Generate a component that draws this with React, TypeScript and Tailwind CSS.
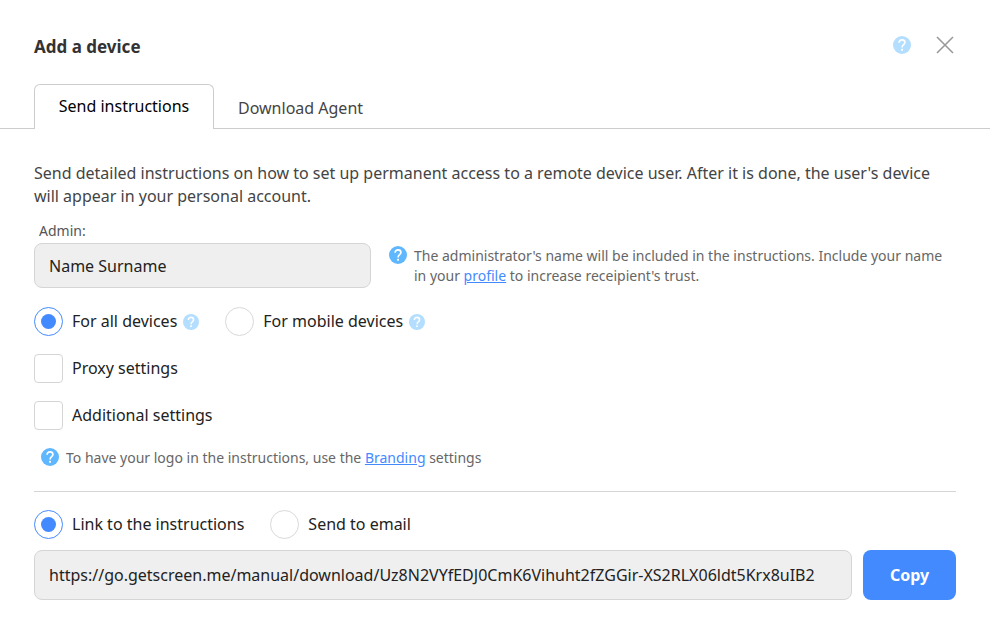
import { useState } from 'react';
import type { ReactNode } from 'react';

const MANUAL_URL =
  'https://go.getscreen.me/manual/download/Uz8N2VYfEDJ0CmK6Vihuht2fZGGir-XS2RLX06ldt5Krx8uIB2';

const tabs = [
  { id: 'send', title: 'Send instructions' },
  { id: 'download', title: 'Download Agent' },
];

function HelpIcon({ className }: { className: string }) {
  return (
    <svg viewBox="0 0 18 18" className={`shrink-0 ${className}`} aria-hidden="true">
      <circle cx="9" cy="9" r="9" fill="currentColor" />
      <path
        d="M6.1 6.7C6.1 4.9 7.3 3.8 9 3.8s2.9 1 2.9 2.6c0 1.1-.6 1.7-1.5 2.4-.9.7-1.3 1.1-1.3 2.6"
        fill="none"
        stroke="#fff"
        strokeWidth="1.7"
      />
      <rect x="8.1" y="12.8" width="1.9" height="1.9" fill="#fff" />
    </svg>
  );
}

interface RadioProps {
  name: string;
  checked: boolean;
  onChange: () => void;
  children: ReactNode;
}

function Radio({ name, checked, onChange, children }: RadioProps) {
  return (
    <label className="flex items-center gap-[9px]">
      <input
        type="radio"
        name={name}
        checked={checked}
        onChange={onChange}
        className="grid size-[29px] shrink-0 appearance-none place-items-center rounded-full border border-[#d9d9d9] bg-white before:size-[15px] before:rounded-full checked:border-[#448aff] checked:before:bg-[#448aff]"
      />
      {children}
    </label>
  );
}

function Checkbox({ children }: { children: ReactNode }) {
  return (
    <label className="flex items-center gap-[9px] self-start">
      <input
        type="checkbox"
        className="size-[29px] shrink-0 appearance-none rounded-[4px] border border-[#d5d5d5] bg-white checked:border-[#448aff] checked:bg-[#448aff]"
      />
      {children}
    </label>
  );
}

export default function App() {
  const [tab, setTab] = useState('send');
  const [target, setTarget] = useState('all');
  const [delivery, setDelivery] = useState('link');

  return (
    <div className="min-h-screen bg-white pb-8 font-['Noto_Sans',sans-serif] text-base leading-[23px] text-[#222]">
      <header className="flex items-start justify-between px-[34px] pt-8">
        <h1 className="text-[17px] leading-[30px] font-bold text-[#333]">Add a device</h1>
        <div className="flex items-center gap-6 pt-[3px] pr-px">
          <button type="button" aria-label="Help">
            <HelpIcon className="size-[18px] text-[#b3deff]" />
          </button>
          <button type="button" aria-label="Close">
            <svg viewBox="0 0 20 20" className="size-5" fill="none" stroke="#999" strokeWidth="1.6">
              <path d="M2 2l16 16M18 2L2 18" />
            </svg>
          </button>
        </div>
      </header>

      <div role="tablist" className="mt-[22px] flex border-b border-[#ccc] px-[34px]">
        {tabs.map(({ id, title }) => (
          <button
            key={id}
            type="button"
            role="tab"
            aria-selected={tab === id}
            onClick={() => setTab(id)}
            className={
              tab === id
                ? '-mb-px h-[45px] w-[180px] rounded-t-[6px] border border-b-0 border-[#ccc] bg-white pb-0.5 text-black'
                : 'h-11 px-6 pt-1 text-[#444]'
            }
          >
            {title}
          </button>
        ))}
      </div>

      <main className="px-[34px] pt-[33px]">
        <p className="text-[#444]">
          Send detailed instructions on how to set up permanent access to a remote device user. After it is done, the
          user's device will appear in your personal account.
        </p>

        <div className="mt-[11px] flex items-end gap-[18px]">
          <div className="w-[337px] shrink-0">
            <label htmlFor="admin" className="block pl-[5px] text-sm leading-6 text-[#555]">
              Admin:
            </label>
            <input
              id="admin"
              readOnly
              value="Name Surname"
              className="block h-[45px] w-full rounded-[8px] border border-[#d5d5d5] bg-[#efefef] px-[14px]"
            />
          </div>
          <div className="flex gap-[7px] pb-0.5 text-sm leading-5 text-[#666]">
            <HelpIcon className="size-[18px] text-[#5fb7ff]" />
            <p>
              The administrator's name will be included in the instructions. Include your name <br />
              in your{' '}
              <a href="#profile" className="text-[#448aff] underline">
                profile
              </a>{' '}
              to increase receipient's trust.
            </p>
          </div>
        </div>

        <div className="mt-[19px] flex gap-[26px]">
          <Radio name="target" checked={target === 'all'} onChange={() => setTarget('all')}>
            <span className="flex items-center gap-[6px]">
              For all devices
              <HelpIcon className="size-4 text-[#b3deff]" />
            </span>
          </Radio>
          <Radio name="target" checked={target === 'mobile'} onChange={() => setTarget('mobile')}>
            <span className="flex items-center gap-[6px]">
              For mobile devices
              <HelpIcon className="size-4 text-[#b3deff]" />
            </span>
          </Radio>
        </div>

        <div className="mt-[18px] flex flex-col gap-[18px]">
          <Checkbox>Proxy settings</Checkbox>
          <Checkbox>Additional settings</Checkbox>
        </div>

        <div className="mt-[18px] flex gap-[7px] border-b border-[#d5d5d5] pb-[23px] pl-[7px] text-sm leading-5 text-[#666]">
          <HelpIcon className="size-[18px] text-[#5fb7ff]" />
          <p>
            To have your logo in the instructions, use the{' '}
            <a href="#branding" className="text-[#448aff] underline">
              Branding
            </a>{' '}
            settings
          </p>
        </div>

        <div className="mt-[18px] flex gap-[26px]">
          <Radio name="delivery" checked={delivery === 'link'} onChange={() => setDelivery('link')}>
            Link to the instructions
          </Radio>
          <Radio name="delivery" checked={delivery === 'email'} onChange={() => setDelivery('email')}>
            Send to email
          </Radio>
        </div>

        <div className="mt-[11px] flex gap-[11px]">
          <input
            aria-label="Link to the instructions"
            readOnly
            value={MANUAL_URL}
            className="h-[50px] min-w-0 flex-1 rounded-[8px] border border-[#d5d5d5] bg-[#efefef] px-[14px]"
          />
          <button
            type="button"
            onClick={() => navigator.clipboard?.writeText(MANUAL_URL)}
            className="h-[50px] w-[93px] rounded-[8px] bg-[#448aff] font-bold text-white"
          >
            Copy
          </button>
        </div>
      </main>
    </div>
  );
}
